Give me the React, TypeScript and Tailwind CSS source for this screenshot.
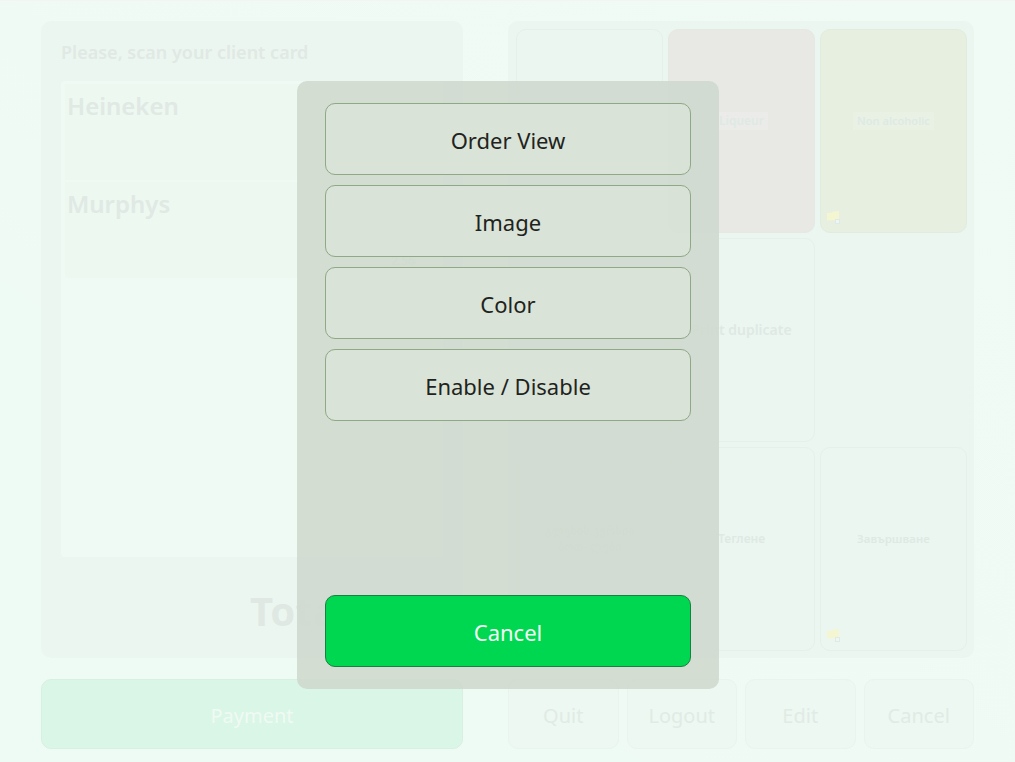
const FONT = "font-['Noto_Sans','DejaVu_Sans',sans-serif]";

const Folder = () => (
  <svg width="16" height="15" viewBox="0 0 16 15" className="absolute bottom-[7px] left-[5px]">
    <path d="M1 3l5-.5 1-1 6-.5v9l-12 .5z" fill="#f4f6d2" />
    <rect x="9.5" y="9.5" width="4" height="4" fill="#eef6f3" stroke="#dfe9e8" strokeWidth="1" />
  </svg>
);

type TileProps = { label?: string; bg?: string; folder?: boolean; chip?: boolean; border?: string; size?: string };

const Tile = ({ label, bg = "bg-[#ebf6f0]", folder, chip, border = "border-[#e5f0ea]", size = "text-[11.5px]" }: TileProps) => (
  <div className={`relative flex items-center justify-center rounded-[10px] border px-3 pb-[21px] text-center ${bg} ${border}`}>
    {label && (
      <span className={`leading-[16px] font-semibold text-[#dfe9e4] ${size} ${chip ? "bg-white/15 px-[4px] py-[1px]" : ""}`}>
        {label}
      </span>
    )}
    {folder && <Folder />}
  </div>
);

const Row = ({ name, price }: { name: string; price: string }) => (
  <div className="relative h-[96px] bg-[#edf8f1] px-[2px] pt-[4px]">
    <span className="text-[24px] leading-[36px] font-semibold text-[#e0e9e4]">{name}</span>
    <span className="absolute right-[24px] bottom-[8px] text-[12px] font-semibold text-[#e0e9e4]">{price}</span>
  </div>
);

const ActionButton = ({ label }: { label: string }) => (
  <div className="flex h-[70px] flex-1 items-center justify-center rounded-[10px] border border-[#e8f4ed] bg-[#edf8f2] pt-[4px] text-[20px] text-[#e1ebe5]">
    {label}
  </div>
);

const MenuButton = ({ label }: { label: string }) => (
  <button className="flex h-[72px] w-full items-center justify-center rounded-[10px] border border-[#8fa886] bg-[#d9e3d7]/95 pt-[2px] text-[22px] text-[#1f2320]">
    {label}
  </button>
);

export default function App() {
  return (
    <div className={`relative h-[762px] w-[1015px] overflow-hidden border-t border-[#f2f5f3] bg-[linear-gradient(217deg,#f0fbf6_0%,#effaf5_68.3%,#edfbf4_68.3%,#eefbf5_100%)] ${FONT}`}>
      <div className="flex flex-col gap-[21px] pt-[20px] pl-[41px]">
        <div className="flex gap-[45px]">
          {/* order panel */}
          <div className="flex h-[637px] w-[422px] flex-col rounded-[10px] bg-[#ecf6f0] px-[20px]">
            <p className="h-[60px] pt-[17px] text-[18px] leading-[28px] font-semibold text-[#e0e9e4]">
              Please, scan your client card
            </p>
            <div className="h-[476px] rounded-[4px] bg-[#f0faf5] px-[4px] pt-[3px]">
              <div className="flex flex-col gap-[2px]">
                <Row name="Heineken" price="" />
                <Row name="Murphys" price="2.56" />
              </div>
            </div>
            <p className="pt-[24px] pl-[189px] text-[40px] leading-[60px] font-bold whitespace-nowrap text-[#dfe8e3]">Total: 2.56</p>
          </div>
          {/* category tiles */}
          <div className="grid h-[637px] w-[466px] grid-cols-[147px_147px_147px] grid-rows-[204px_204px_204px] gap-[5px] rounded-[10px] bg-[#ecf6f0] p-[8px]">
            <Tile />
            <Tile label="Liqueur" bg="bg-[#e8e9e5]" border="border-[#e6e8e3]" size="text-[12px]" chip />
            <Tile label="Non alcoholic" bg="bg-[#e6efe0]" border="border-[#e2ecdd]" size="text-[11px]" folder chip />
            <Tile />
            <Tile label="Print duplicate" size="text-[14px]" />
            <div />
            <Tile label="გლეხის ვერსია ბოთ- ლები" />
            <Tile label="Теглене" size="text-[12px]" />
            <Tile label="Завършване" folder />
          </div>
        </div>
        <div className="flex gap-[45px]">
          <div className="flex h-[70px] w-[422px] items-center justify-center rounded-[10px] border border-[#d8f0e2] bg-[#daf6e6] pt-[4px] text-[20px] text-[#f0faf4]">
            Payment
          </div>
          <div className="flex w-[466px] gap-[8px]">
            <ActionButton label="Quit" />
            <ActionButton label="Logout" />
            <ActionButton label="Edit" />
            <ActionButton label="Cancel" />
          </div>
        </div>
      </div>

      {/* context menu over the dimmed page */}
      <div className="absolute top-[80px] left-[297px] flex h-[608px] w-[422px] flex-col justify-between rounded-[10px] bg-[#cfd9ce]/90 px-[28px] py-[22px]">
        <div className="flex flex-col gap-[10px]">
          <MenuButton label="Order View" />
          <MenuButton label="Image" />
          <MenuButton label="Color" />
          <MenuButton label="Enable / Disable" />
        </div>
        <button className="flex h-[72px] w-full items-center justify-center rounded-[10px] border border-[#17813f] bg-[#00d750] pt-[2px] text-[22px] text-[#f2fff6]">
          Cancel
        </button>
      </div>
    </div>
  );
}
